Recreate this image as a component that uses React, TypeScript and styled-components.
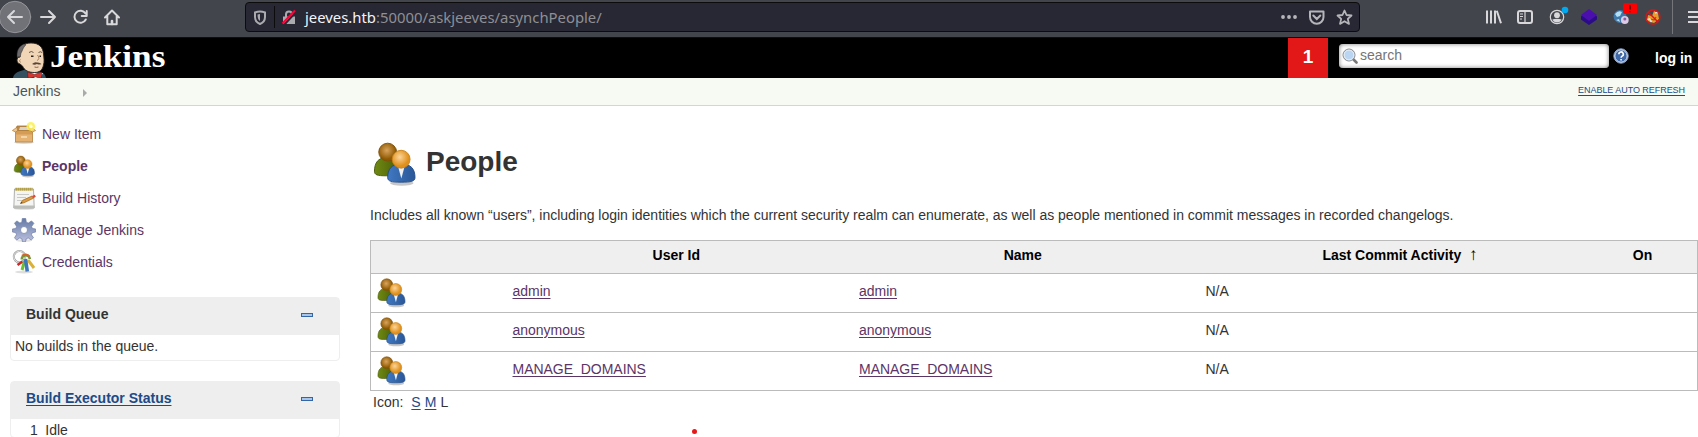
import React from 'react';
import styled, { createGlobalStyle } from 'styled-components';

const Global = createGlobalStyle`
  * { box-sizing: border-box; }
  html, body { margin: 0; padding: 0; background: #fff; overflow: hidden; }
  body { font-family: "Liberation Sans", Arial, sans-serif; font-size: 14px; line-height: 16px; color: #333; }
`;

const Page = styled.div`
  width: 1698px;
  height: 437px;
  overflow: hidden;
  position: relative;
`;

const BrowserBar = styled.div`
  height: 38px;
  background: #43454c;
  border-bottom: 1px solid #0d0e10;
  display: flex;
  align-items: flex-start;
`;

const NavButtons = styled.div`
  width: 245px;
  height: 34px;
  flex: none;
`;

const UrlBar = styled.div`
  width: 1115px;
  height: 30px;
  margin-top: 2px;
  flex: none;
  display: flex;
  align-items: center;
  background: #272834;
  border: 1px solid #0c0c0d;
  border-radius: 4px;
`;

const Url = styled.div`
  flex: 1;
  font: 14.85px/26px "Noto Sans", sans-serif;
  color: #8f8f95;
  white-space: nowrap;
  b { font-weight: 400; color: #f4f4f6; }
`;

const Toolbar = styled.div`
  flex: 1;
  height: 37px;
`;

const Header = styled.header`
  height: 40px;
  background: #000;
  display: flex;
  align-items: flex-start;
  color: #fff;
`;

const Brand = styled.div`
  width: 1288px;
  height: 40px;
  padding-left: 13px;
  display: flex;
  span {
    font: bold 31px/38px "Liberation Serif", serif;
    transform: scaleX(1.135);
    transform-origin: left;
    margin-left: 4px;
  }
`;

const Alert = styled.div`
  width: 40px;
  height: 40px;
  background: #e21717;
  font-weight: bold;
  font-size: 19px;
  line-height: 37px;
  text-align: center;
`;

const Search = styled.div`
  width: 270px;
  height: 24px;
  margin: 6px 0 0 11px;
  padding-left: 3px;
  background: #fff;
  border-radius: 4px;
  box-shadow: inset 0 0 4px #777;
  display: flex;
  align-items: center;
  color: #757575;
  span { margin: -2px 0 0 2px; }
`;

const Help = styled.svg`
  margin: 10px 0 0 4px;
  flex: none;
`;

const Login = styled.a`
  margin: 12px 0 0 26px;
  font-weight: bold;
  white-space: nowrap;
`;

const Crumbs = styled.nav`
  height: 28px;
  background: #f6faf2;
  border-bottom: 1px solid #d3d7cf;
  display: flex;
  padding: 5px 13px 0 13px;
  color: #4d545d;
  svg { margin: 6px 0 0 23px; }
`;

const Refresh = styled.a`
  margin-left: auto;
  font-size: 9px;
  letter-spacing: -0.05px;
  line-height: 15px;
  color: #204a87;
  text-decoration: underline;
  text-underline-offset: 2px;
`;

const Body = styled.div`
  display: flex;
`;

const Side = styled.aside`
  width: 370px;
  padding: 12px 0 0 10px;
  flex: none;
`;

const Tasks = styled.div`
  margin-bottom: 19px;
`;

const Task = styled.a<{ $active?: boolean }>`
  display: flex;
  align-items: center;
  height: 32px;
  padding-left: 2px;
  color: #5c3566;
  font-weight: ${p => (p.$active ? 'bold' : 'normal')};
  svg { margin-right: 6px; }
`;

const Pane = styled.section`
  width: 330px;
  margin-bottom: 20px;
  border: 1px solid #eee;
  border-radius: 4px;
  background: #fff;
`;

const PaneHead = styled.div<{ $link?: boolean }>`
  height: 37px;
  padding: 0 26px 5px 15px;
  display: flex;
  align-items: center;
  justify-content: space-between;
  background: #eee;
  font-weight: bold;
  color: ${p => (p.$link ? '#204a87' : '#333')};
  span { text-decoration: ${p => (p.$link ? 'underline' : 'none')}; text-underline-offset: 2px; }
`;

const Collapse = styled.i`
  width: 12px;
  height: 4px;
  margin-top: 2px;
  border: 1px solid #3465a4;
  background: #a9c6ea;
`;

const PaneBody = styled.div`
  height: 25px;
  padding: 3px 4px;
`;

const Executor = styled.div`
  display: flex;
  gap: 7.5px;
  padding: 4px 0 0 19px;
  line-height: 14px;
`;

const Main = styled.main`
  flex: 1;
  padding-top: 33px;
`;

const Title = styled.h1`
  display: flex;
  align-items: center;
  height: 46px;
  margin: 0 0 22px;
  font-size: 28px;
  line-height: 32px;
  svg { margin: 2px 8px 0 0; }
`;

const Intro = styled.p`
  margin: 0 0 17px;
  letter-spacing: -0.012px;
  white-space: nowrap;
`;

const Table = styled.div`
  width: 1328px;
  border: 1px solid #bbb;
`;

const Row = styled.div<{ $head?: boolean }>`
  display: grid;
  grid-template-columns: 132px 346.5px 346.5px 392px 109px;
  height: ${p => (p.$head ? '32px' : '39px')};
  padding-top: ${p => (p.$head ? '6px' : '0')};
  background: ${p => (p.$head ? '#efefef' : '#fff')};
  color: ${p => (p.$head ? '#000' : '#333')};
  font-weight: ${p => (p.$head ? 'bold' : 'normal')};
  & + & { border-top: 1px solid #bbb; }
`;

const HeadCell = styled.span<{ $shift?: number }>`
  text-align: center;
  padding-left: ${p => p.$shift || 0}px;
`;

const Arrow = styled.span`
  margin-left: 4px;
  font: bold 17px/14px "Liberation Sans", sans-serif;
`;

const Cell = styled.div`
  padding: 9px 0 0 9.5px;
  letter-spacing: -0.03px;
`;

const IconCell = styled.div`
  padding: 2px 0 0 4px;
`;

const UserLink = styled.a`
  color: #5c3566;
  text-decoration: underline;
  text-underline-offset: 2px;
`;

const IconSizes = styled.div`
  padding: 3px 0 0 3px;
  display: flex;
  gap: 4px;
  span { margin-right: 4px; }
  a { color: #204a87; text-decoration: underline; text-underline-offset: 2px; }
`;

const Dot = styled.i`
  position: absolute;
  left: 691.5px;
  top: 429px;
  width: 5px;
  height: 5px;
  border-radius: 50%;
  background: #e81818;
`;

const PeopleIcon = ({ size }: { size: number }) => (
  <svg width={size} height={size} viewBox="-1.9 -2.4 52.700 52.700">
    <defs>
      <radialGradient id="hb" cx=".45" cy=".4"><stop offset="0" stopColor="#d9a45c" /><stop offset="1" stopColor="#8f5902" /></radialGradient>
      <radialGradient id="ho" cx=".42" cy=".38"><stop offset="0" stopColor="#fbd59a" /><stop offset="1" stopColor="#e0901c" /></radialGradient>
      <linearGradient id="gb" x2="1"><stop offset="0" stopColor="#6f8a12" /><stop offset="1" stopColor="#4b5e06" /></linearGradient>
      <linearGradient id="bb" x2="1"><stop offset="0" stopColor="#4078c2" /><stop offset="1" stopColor="#2a5797" /></linearGradient>
    </defs>
    <ellipse cx="33" cy="46" rx="13" ry="3" fill="#000" opacity=".22" />
    <path d="M3 33c0-9 4-15 13-15s14 6 14 15c0 4-4 5-14 5S3 37 3 33z" fill="url(#gb)" stroke="#465608" />
    <circle cx="17.500" cy="12" r="9.800" fill="url(#hb)" stroke="#7d500b" />
    <path d="M17.500 40c0-9 4-15 15-15s15 6 15 15c0 4-4 5-15 5s-15-1-15-5z" fill="url(#bb)" stroke="#204a87" />
    <path d="M29 28h7l-3.500 13z" fill="#eef1f5" />
    <circle cx="32.300" cy="19.800" r="9.800" fill="url(#ho)" stroke="#c98217" />
  </svg>
);

const BoxIcon = () => (
  <svg width="24" height="24" viewBox="0 0 24 24">
    <ellipse cx="12" cy="20.500" rx="10" ry="1.500" fill="#000" opacity=".15" />
    <path d="M5 4h14l1.500 5h-17z" fill="#b98a4c" stroke="#a87432" strokeWidth=".8" />
    <path d="M8 5h8l1 3H7z" fill="#d8d4cc" />
    <path d="M3.500 9h17v11h-17z" fill="#e5b272" stroke="#b57d38" strokeWidth=".8" />
    <path d="M4 9.500h16v3H4z" fill="#d59c56" />
    <path d="M3.500 10L.4 8.500 5 5.200 5.500 9zM20.500 10l3.100-1.500L19 5.200 18.500 9z" fill="#efc68f" stroke="#b57d38" strokeWidth=".7" />
    <path d="M9 14h6v2H9z" fill="#f2d4a6" />
    <circle cx="18.800" cy="4.400" r="4.300" fill="#fcf04f" opacity=".85" />
    <circle cx="18.800" cy="4.400" r="1.800" fill="#fffde0" />
  </svg>
);

const NoteIcon = () => (
  <svg width="24" height="24" viewBox="0 0 24 24">
    <ellipse cx="12" cy="22.800" rx="10" ry="1" fill="#000" opacity=".15" />
    <path d="M2.500 3h19l.7 19H1.800z" fill="#f4f4f2" stroke="#a6a6a1" strokeWidth=".9" />
    <path d="M1.500 19.500h21V22h-21z" fill="#bcbdb9" />
    <path d="M3.500 3.200h17" stroke="#a9922a" strokeWidth="3" strokeDasharray="1.300 .7" />
    <path d="M5 8.500h12M5 11.500h9M5 14.500h5" stroke="#c9c9c5" />
    <path d="M8.500 17.500l2-3.200 9.500-4.300 1.300 2.300-9.300 4.500z" fill="#dd9a42" stroke="#8f5902" strokeWidth=".6" />
    <path d="M8.300 17.600l1.200-1.700 1 1.200z" fill="#333" />
    <path d="M20 10l2.800-1.300 1 2.100-2.500 1.500z" fill="#dd4a3a" />
  </svg>
);

const GearIcon = () => (
  <svg width="24" height="24" viewBox="0 0 24 24">
    <defs>
      <linearGradient id="gear" y2="1" x2="0"><stop offset="0" stopColor="#647aa6" /><stop offset="1" stopColor="#bcc0df" /></linearGradient>
    </defs>
    <ellipse cx="12" cy="22.500" rx="8" ry="1.500" fill="#000" opacity=".12" />
    <path
      fillRule="evenodd"
      fill="url(#gear)"
      stroke="#6d7ca6"
      strokeWidth=".7"
      d="M10.300 .5h3.400l.6 3.800 2 .8 3.200-2.200 2.400 2.400-2.300 3.200.8 2 3.300.5v3l-3.400.7-.9 2 2.100 3.100-2.300 2.200-3-2.100-2 .9-.7 3h-3l-.6-3-2.100-.9-3.200 2.100-2.100-2.200 2-3.200-.8-2L.4 14v-3l3.400-.5.800-2.100-2.100-3.200 2.300-2.300L7.900 5l1.900-.7zM12 8.500a3.500 3.500 0 1 0 0 7a3.500 3.500 0 1 0 0-7z"
    />
  </svg>
);

const KeysIcon = () => (
  <svg width="24" height="24" viewBox="0 0 24 24" fill="none">
    <ellipse cx="12" cy="22" rx="9" ry="1.500" fill="#000" opacity=".13" />
    <circle cx="7.500" cy="6.800" r="5.700" stroke="#999" strokeWidth="2" />
    <circle cx="7.500" cy="6.800" r="5.700" stroke="#eee" strokeWidth=".9" />
    <path d="M5.500 15l5-3.500" stroke="#d22" strokeWidth="2.600" />
    <path d="M16 10l6 8" stroke="#d9b13b" strokeWidth="3" />
    <path d="M12.500 11l-2.500 9" stroke="#6cc22c" strokeWidth="3" />
    <path d="M13.500 9l1.800 12.500" stroke="#3d78bd" strokeWidth="3.600" />
    <path d="M9.800 9.500a4 4 0 0 1 8-.5" stroke="#6f9a38" strokeWidth="2.600" />
    <path d="M10 5.800a5.200 5.200 0 0 1 7.500.7" stroke="#d2652c" strokeWidth="2" />
  </svg>
);

const Butler = () => (
  <svg width="33" height="40" viewBox="0 0 33 40">
    <path d="M0 40c1-4 3-6 11-8l14 2c5 0 7 2 8 6z" fill="#335061" />
    <path d="M6 15C7 8 11 5 18 5c8 0 12 4 12.500 11 .5 4 1 8 0 11-1 5-4 7.500-9 7.500-6 0-10-2-12-6.500L7 26c-4-1-4-7 0-7z" fill="#f0d6b7" stroke="#2a2320" strokeWidth=".9" />
    <path d="M4.300 20C3 13 6 8 11 6l2 .7C9.500 10 10 12 8 15l-.8 4-1.500-.2z" fill="#6d6b6d" stroke="#2a2320" strokeWidth=".5" />
    <path d="M7.500 21.500q-2 1 0 3" stroke="#8a6b52" fill="none" strokeWidth=".8" />
    <path d="M16 14.500q2.500-2 4.500 0M25.500 14.500q2-1.500 3.500 0" stroke="#57483d" fill="none" strokeWidth=".9" />
    <path d="M18 18.200h2.500M26.500 18.200H28" stroke="#2a2320" strokeWidth="1.500" />
    <path d="M24.500 17q3 4-.5 5.500" stroke="#9c7656" fill="none" strokeWidth=".9" />
    <path d="M19 26q3-2.600 5-1.500 2.500-.5 4.500 1.500-2.500 1-4.500 0-2.500 1.500-5 0z" fill="#5b4438" />
    <path d="M21.500 29q2 .8 4 0" stroke="#8a4b40" fill="none" strokeWidth=".9" />
    <path d="M17 35l5 5h5l3-5z" fill="#f4f4f4" />
    <path d="M14.500 34l7 2.500L28.500 34v6H26l-4-1.500L18 40h-3z" fill="#d33833" stroke="#6c1713" strokeWidth=".6" />
  </svg>
);

const NavIcons = () => (
  <svg width="245" height="37" fill="none" stroke="#d8d8da" strokeWidth="2" strokeLinecap="round" strokeLinejoin="round">
    <circle cx="15" cy="17" r="15.700" fill="#717278" stroke="#94959a" strokeWidth="1" />
    <path d="M22 17H8M14 11l-6 6 6 6" />
    <path d="M41 17h14M49 11l6 6-6 6" />
    <path d="M85.500 13.500a6 6 0 1 0 .3 6M86.700 11v5h-5" />
    <path d="M105 17.500l7-7 7 7M107.300 16v8.200h9.400V16" />
    <path d="M112 24v-3" strokeWidth="2.600" />
  </svg>
);

const Tools = () => (
  <svg width="338" height="37" viewBox="1360 0 338 37" fill="none" stroke="#d8d8da" strokeWidth="2">
    <path d="M1487 10.500v13M1491 10.500v13M1495 10.500v13M1496.800 10.800l4.200 12.500" />
    <rect x="1518" y="11" width="14" height="12" rx="2" />
    <path d="M1525 11v12M1520 14h3M1520 16.500h3M1520 19h2" strokeWidth="1.200" />
    <circle cx="1557" cy="17" r="6.700" strokeWidth="1.200" />
    <circle cx="1557" cy="15.200" r="2.900" fill="#d8d8da" stroke="none" />
    <path d="M1552.300 19.500q4.700-1.500 9.400 0q-1.500 3-4.700 3t-4.700-3z" fill="#d8d8da" stroke="none" />
    <circle cx="1565" cy="10" r="3.300" fill="#00a8f0" stroke="none" />
    <path d="M1589 10l8 6.500v3l-8 5.500-8-5.500v-3z" fill="#2a0c86" stroke="none" />
    <path d="M1589 9l8 6-8 6-8-6z" fill="#4b0fae" stroke="none" />
    <circle cx="1620" cy="16.500" r="6.500" fill="#3f78aa" stroke="none" />
    <path d="M1615 14q3-4 7-2l-2 4-3 1zM1616 20l3-1 1 3z" fill="#b4def2" stroke="none" />
    <circle cx="1624.800" cy="20" r="3.900" fill="#dccbe4" stroke="none" />
    <circle cx="1624.800" cy="19" r="1.500" fill="#8d5aa6" stroke="none" />
    <rect x="1623" y="3" width="14" height="11" rx="2" fill="#f00" stroke="none" />
    <path d="M1630 5v4.500M1630 11v1.300" stroke="#300" strokeWidth="1.300" />
    <path d="M1647 21l1-6 4 1 2-5 4 2 1 6-5 4z" fill="#ef982c" stroke="none" />
    <path d="M1646.500 20l3-1 2 3M1655 13l3-1" stroke="#dfe3e6" strokeWidth="1.600" />
    <path d="M1651 19l3 1 2-3" stroke="#9a5a18" strokeWidth="1.300" />
    <circle cx="1653" cy="17" r="7" stroke="#d31818" strokeWidth="1.300" />
    <path d="M1648 12l10 10" stroke="#d31818" strokeWidth="1.400" />
    <path d="M1672.500 0v34" stroke="#74757a" strokeWidth="1" />
    <path d="M1688 12h10M1688 17h10M1688 22h10" />
  </svg>
);

const users = ['admin', 'anonymous', 'MANAGE_DOMAINS'];

export default function App() {
  return (
    <Page>
      <Global />
      <BrowserBar>
        <NavButtons><NavIcons /></NavButtons>
        <UrlBar>
          <svg width="59" height="28" fill="none">
            <path d="M14 8.500q2.500 0 5 1V14q0 5-5 7-5-2-5-7V9.500q2.500-1 5-1z" stroke="#aaaaaf" strokeWidth="2" />
            <path d="M14 11v7q-2.500-1.500-2.500-6.500z" fill="#aaaaaf" />
            <path d="M28.500 3v22" stroke="#0c0c0d" />
            <path d="M37 13.500h12V21H37z" fill="#aaaaaf" />
            <path d="M40 14v-2.500a3 3 0 0 1 6 0V14" stroke="#aaaaaf" strokeWidth="2" />
            <path d="M38 22L50 9" stroke="#272834" strokeWidth="2" />
            <path d="M36.500 20.500L49 7.500" stroke="#ff0039" strokeWidth="2" />
          </svg>
          <Url><b>jeeves.htb</b>:50000/askjeeves/asynchPeople/</Url>
          <svg width="80" height="28" fill="none" stroke="#b6b6ba" strokeWidth="2">
            <path d="M4 14h.01M10 14h.01M16 14h.01" strokeWidth="3.800" strokeLinecap="round" />
            <path d="M31 8.500h13.500V14a6.700 6.700 0 0 1-13.500 0z" strokeLinejoin="round" />
            <path d="M34.300 12.500l3.500 3.500 3.500-3.500" strokeLinecap="round" />
            <path d="M65.500 7.500l2 4.500 5 .5-3.700 3.400 1.200 5-4.500-2.700-4.500 2.700 1.200-5-3.700-3.400 5-.5z" strokeWidth="1.800" strokeLinejoin="round" />
          </svg>
        </UrlBar>
        <Toolbar><Tools /></Toolbar>
      </BrowserBar>
      <Header>
        <Brand>
          <Butler />
          <span>Jenkins</span>
        </Brand>
        <Alert>1</Alert>
        <Search>
          <svg width="16" height="16" viewBox="0 0 16 16">
            <path d="M11.500 11.500l3 3" stroke="#777" strokeWidth="2.600" strokeLinecap="round" />
            <circle cx="7" cy="7" r="6" fill="#b9d5f2" stroke="#888" strokeWidth="1" />
            <circle cx="7" cy="7" r="4.900" fill="none" stroke="#e9eef4" strokeWidth="1" />
          </svg>
          <span>search</span>
        </Search>
        <Help width="16" height="16" viewBox="0 0 16 16">
          <circle cx="8" cy="8" r="7.200" fill="#3f69a8" stroke="#8fa6c9" strokeWidth="1" />
          <circle cx="8" cy="8" r="6.200" fill="none" stroke="#e3eaf3" strokeWidth="1" />
          <path d="M5.900 6.300a2.200 2.200 0 1 1 3.200 1.800q-1 .6-1 1.700M8.100 11v1.600" stroke="#fff" strokeWidth="1.600" fill="none" />
        </Help>
        <Login>log in</Login>
      </Header>
      <Crumbs>
        Jenkins
        <svg width="5" height="8"><path d="M0 0l4 4-4 4z" fill="#aaa" /></svg>
        <Refresh>ENABLE AUTO REFRESH</Refresh>
      </Crumbs>
      <Body>
        <Side>
          <Tasks>
            <Task><BoxIcon />New Item</Task>
            <Task $active><PeopleIcon size={24} />People</Task>
            <Task><NoteIcon />Build History</Task>
            <Task><GearIcon />Manage Jenkins</Task>
            <Task><KeysIcon />Credentials</Task>
          </Tasks>
          <Pane>
            <PaneHead><span>Build Queue</span><Collapse /></PaneHead>
            <PaneBody>No builds in the queue.</PaneBody>
          </Pane>
          <Pane>
            <PaneHead $link><span>Build Executor Status</span><Collapse /></PaneHead>
            <Executor><span>1</span><span>Idle</span></Executor>
          </Pane>
        </Side>
        <Main>
          <Title><PeopleIcon size={48} />People</Title>
          <Intro>Includes all known “users”, including login identities which the current security realm can enumerate, as well as people mentioned in commit messages in recorded changelogs.</Intro>
          <Table>
            <Row $head>
              <HeadCell />
              <HeadCell>User Id</HeadCell>
              <HeadCell>Name</HeadCell>
              <HeadCell $shift={16}>Last Commit Activity <Arrow>↑</Arrow></HeadCell>
              <HeadCell>On</HeadCell>
            </Row>
            {users.map(u => (
              <Row key={u}>
                <IconCell><PeopleIcon size={32} /></IconCell>
                <Cell><UserLink>{u}</UserLink></Cell>
                <Cell><UserLink>{u}</UserLink></Cell>
                <Cell>N/A</Cell>
              </Row>
            ))}
          </Table>
          <IconSizes><span>Icon:</span><a>S</a><a>M</a>L</IconSizes>
        </Main>
      </Body>
      <Dot />
    </Page>
  );
}
